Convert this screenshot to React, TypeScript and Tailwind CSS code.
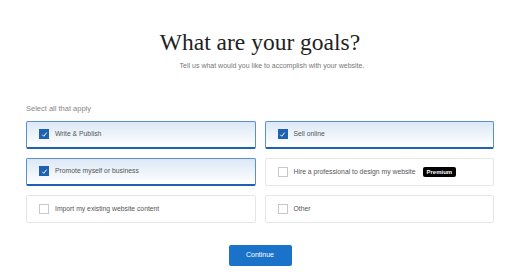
const goals = [
  { label: "Write & Publish", checked: true },
  { label: "Sell online", checked: true },
  { label: "Promote myself or business", checked: true },
  { label: "Hire a professional to design my website", checked: false, premium: true },
  { label: "Import my existing website content", checked: false },
  { label: "Other", checked: false },
];

const Checkbox = ({ checked }: { checked: boolean }) =>
  checked ? (
    <div className="w-[10px] h-[10px] bg-[#1c62b0] flex items-center justify-center shrink-0">
      <svg width="7" height="7" viewBox="0 0 8 8">
        <path d="M1.5 4.3 L3.2 6 L6.5 1.8" stroke="white" strokeWidth="1.1" fill="none" />
      </svg>
    </div>
  ) : (
    <div className="w-[10px] h-[10px] border border-[#c8c8c8] bg-white shrink-0" />
  );

const GoalCard = ({ label, checked, premium }: { label: string; checked: boolean; premium?: boolean }) => (
  <div
    className={
      checked
        ? "h-[28px] rounded-[2px] border border-[#5b8fd0] border-b-2 border-b-[#1c62b0] bg-gradient-to-b from-[#dbe8f5] to-white flex items-center pl-[12px] gap-[6px]"
        : "h-[28px] rounded-[2px] border border-[#e6e6e6] bg-white flex items-center pl-[12px] gap-[6px]"
    }
  >
    <Checkbox checked={checked} />
    <span className="text-[6.8px] text-[#555]">{label}</span>
    {premium && (
      <span className="ml-[1px] bg-black text-white text-[6px] font-bold px-[4px] py-[1px] rounded-[2px] leading-[8px]">
        Premium
      </span>
    )}
  </div>
);

export default function App() {
  return (
    <div className="w-[512px] h-[275px] bg-white flex flex-col pl-[26px] pr-[18px] font-['Liberation_Sans',sans-serif]">
      <h1 className="mt-[28px] text-center text-[23.5px] leading-[28px] text-[#222] font-['Liberation_Serif',serif]">
        What are your goals?
      </h1>
      <p className="mt-[5px] pl-[24px] text-center text-[7px] text-[#777]">
        Tell us what would you like to accomplish with your website.
      </p>
      <p className="mt-[31px] text-[7.5px] text-[#888]">Select all that apply</p>
      <div className="mt-[7px] grid grid-cols-2 gap-x-[9px] gap-y-[9px]">
        {goals.map((g) => (
          <GoalCard key={g.label} {...g} />
        ))}
      </div>
      <div className="mt-[22px] flex justify-center">
        <button className="w-[63px] h-[21px] bg-[#1a73c9] text-white text-[7px] rounded-[2px]">Continue</button>
      </div>
    </div>
  );
}
